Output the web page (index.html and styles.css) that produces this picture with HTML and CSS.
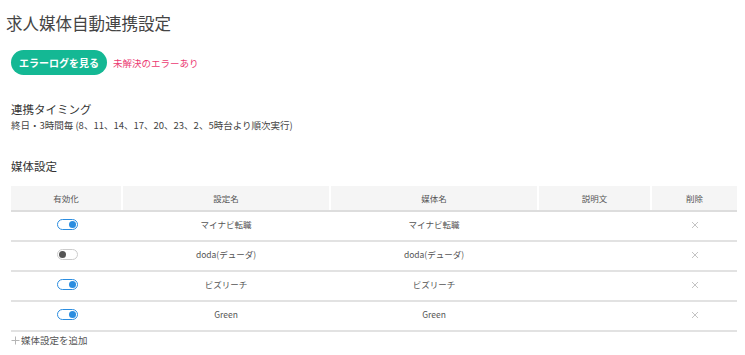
FILE: index.html
```html
<!DOCTYPE html>
<html lang="ja">
<head>
<meta charset="utf-8">
<link rel="stylesheet" href="styles.css">
</head>
<body>
<div class="page">
  <h1 class="title">求人媒体自動連携設定</h1>
  <div class="actions">
    <button class="btn">エラーログを見る</button>
    <span class="err">未解決のエラーあり</span>
  </div>
  <section class="timing">
    <h2 class="sec">連携タイミング</h2>
    <p class="desc">終日・3時間毎 (8、11、14、17、20、23、2、5時台より順次実行)</p>
  </section>
  <section class="media">
    <h2 class="sec">媒体設定</h2>
    <table class="tbl">
      <colgroup>
        <col class="c1"><col class="c2"><col class="c3"><col class="c4"><col class="c5">
      </colgroup>
      <thead>
        <tr><th>有効化</th><th>設定名</th><th>媒体名</th><th>説明文</th><th>削除</th></tr>
      </thead>
      <tbody>
        <tr><td><span class="tg on"></span></td><td>マイナビ転職</td><td>マイナビ転職</td><td></td><td class="x"><svg class="xi" viewBox="0 0 8 8"><path d="M1 1L7 7M7 1L1 7"/></svg></td></tr>
        <tr><td><span class="tg"></span></td><td>doda(デューダ)</td><td>doda(デューダ)</td><td></td><td class="x"><svg class="xi" viewBox="0 0 8 8"><path d="M1 1L7 7M7 1L1 7"/></svg></td></tr>
        <tr><td><span class="tg on"></span></td><td>ビズリーチ</td><td>ビズリーチ</td><td></td><td class="x"><svg class="xi" viewBox="0 0 8 8"><path d="M1 1L7 7M7 1L1 7"/></svg></td></tr>
        <tr><td><span class="tg on"></span></td><td>Green</td><td>Green</td><td></td><td class="x"><svg class="xi" viewBox="0 0 8 8"><path d="M1 1L7 7M7 1L1 7"/></svg></td></tr>
      </tbody>
    </table>
    <div class="add"><svg class="pi" viewBox="0 0 9 9"><path d="M4.5 0.5V8.5M0.5 4.5H8.5"/></svg>媒体設定を追加</div>
  </section>
</div>
</body>
</html>
```
FILE: styles.css
```css
* { box-sizing: border-box; }
body {
  margin: 0;
  font-family: "Noto Sans CJK JP", "Noto Sans", sans-serif;
  color: #444;
  background: #fff;
}
.page { padding: 11px 8px 0 11px; }
.title {
  margin: 0 0 0 -5px;
  font-size: 16.5px;
  font-weight: 400;
  line-height: 25px;
  color: #444;
}
.actions {
  display: flex;
  align-items: center;
  gap: 6px;
  margin-top: 14px;
}
.btn {
  font-family: inherit;
  border: 0;
  background: #14b894;
  color: #fff;
  font-weight: 700;
  font-size: 10px;
  height: 25px;
  padding: 0;
  border-radius: 13px;
  line-height: 25px;
  width: 96px;
  white-space: nowrap;
  text-align: center;
}
.err { color: #eb3a72; font-size: 9.5px; }
.timing { margin-top: 26px; }
.sec {
  margin: 0;
  font-size: 11.5px;
  font-weight: 400;
  line-height: 16px;
  color: #333;
}
.desc { margin: 1px 0 0; font-size: 9.5px; line-height: 14px; color: #444; }
.media { margin-top: 26px; }
.tbl {
  margin-top: 12px;
  width: 726px;
  border-collapse: collapse;
  table-layout: fixed;
  font-size: 8.5px;
}
.c1 { width: 111px; }
.c2 { width: 208px; }
.c3 { width: 208px; }
.c4 { width: 113px; }
.c5 { width: 86px; }
.tbl th {
  background: #f5f5f5;
  font-weight: 400;
  height: 25px;
  color: #555;
  border-left: 2px solid #fff;
  border-bottom: 2px solid #ddd;
  padding: 0;
}
.tbl th:first-child { border-left: 0; }
.tbl td {
  height: 30px;
  text-align: center;
  border-bottom: 2px solid #e2e2e2;
  padding: 0 0 5px;
  color: #555;
}
.xi {
  width: 8px;
  height: 8px;
  stroke: #c4c4c4;
  stroke-width: 1;
  fill: none;
  vertical-align: middle;
  margin-left: 2px;
}
.tg {
  display: inline-block;
  width: 21px;
  height: 11px;
  border: 1.5px solid #ccc;
  border-radius: 6px;
  position: relative;
  vertical-align: middle;
  margin-left: 1px;
}
.tg::after {
  content: "";
  position: absolute;
  top: 0.5px;
  left: 1px;
  width: 7px;
  height: 7px;
  border-radius: 50%;
  background: #555;
}
.tg.on { border-color: #2b8de0; }
.tg.on::after { left: auto; right: 1px; background: #2b8de0; }
.add {
  display: flex;
  align-items: center;
  gap: 1px;
  font-size: 9.5px;
  color: #555;
  margin-top: 1px;
  line-height: 14px;
}
.pi {
  width: 9px;
  height: 9px;
  stroke: #b5b5b5;
  stroke-width: 1;
  fill: none;
}
```
